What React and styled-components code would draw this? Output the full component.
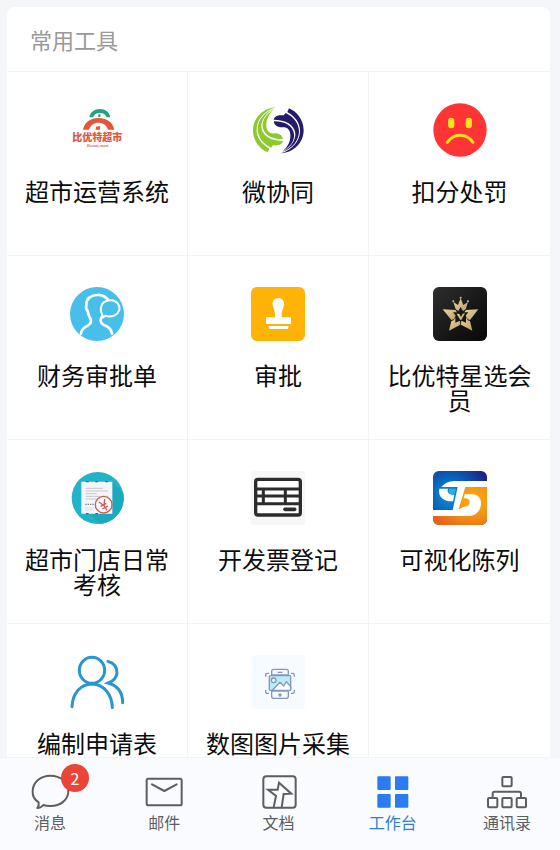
import React from "react";
import styled, { createGlobalStyle, ThemeProvider } from "styled-components";

const theme = {
  page: "#f4f6f9",
  card: "#ffffff",
  bar: "#f9fbfe",
  line: "#f1f3f5",
  muted: "#999999",
  text: "#0c0c0c",
  tab: "#5c5e62",
  active: "#2a7cf0",
  activeText: "#2f80cc",
  badge: "#eb4537"
};

const GlobalStyle = createGlobalStyle`
  * {
    box-sizing: border-box;
  }

  body {
    margin: 0;
    background: ${theme.page};
    font-family: "Noto Sans CJK SC", "Noto Sans", sans-serif;
  }

  button {
    margin: 0;
    border: 0;
    background: none;
    font-family: inherit;
    cursor: pointer;
  }
`;

const Screen = styled.div`
  display: flex;
  flex-direction: column;
  height: 100vh;
`;

const Main = styled.main`
  flex: 1;
  min-height: 0;
  padding: 7px 10px 0 7px;
  overflow-y: auto;
  scrollbar-width: none;
`;

const Card = styled.section`
  background: ${props => props.theme.card};
  border-radius: 8px 8px 0 0;
`;

const CardTitle = styled.h2`
  margin: 0;
  padding: 16px 23px;
  border-bottom: 1px solid ${props => props.theme.line};
  font-size: 22px;
  font-weight: 400;
  line-height: 32px;
  color: ${props => props.theme.muted};
`;

const ToolGrid = styled.div`
  display: grid;
  grid-template-columns: repeat(3, 1fr);
  grid-auto-rows: minmax(184px, auto);
`;

const Tool = styled.button`
  display: flex;
  flex-direction: column;
  align-items: center;
  gap: 21px;
  padding: 31px 16px 0;
  border-bottom: 1px solid ${props => props.theme.line};

  &:not(:nth-child(3n)) {
    border-right: 1px solid ${props => props.theme.line};
  }
`;

const ToolIcon = styled.svg`
  display: block;
  flex: none;
  width: 54px;
  height: 54px;
`;

const ToolLabel = styled.span`
  font-size: 24px;
  line-height: 25px;
  text-align: center;
  color: ${props => props.theme.text};
`;

const TabBar = styled.nav`
  display: flex;
  justify-content: space-between;
  padding: 16px 23px 18px 20px;
  border-top: 1px solid ${props => props.theme.line};
  background: ${props => props.theme.bar};
`;

const Tab = styled.button`
  position: relative;
  display: flex;
  flex-direction: column;
  align-items: center;
  gap: 2px;
  width: 60px;
  padding: 0;
  font-size: 16px;
  line-height: 20px;
  color: ${props => (props.$active ? props.theme.activeText : props.theme.tab)};
`;

const TabIcon = styled.svg`
  display: block;
  width: 40px;
  height: 36px;
  fill: none;
  stroke: currentColor;
  stroke-width: 6;
  stroke-linejoin: round;
  stroke-linecap: round;
`;

const Badge = styled.span`
  position: absolute;
  top: -10px;
  right: -9px;
  width: 28px;
  height: 28px;
  border-radius: 50%;
  background: ${props => props.theme.badge};
  font-size: 16px;
  line-height: 28px;
  text-align: center;
  color: #fff;
`;

const MarketIcon = () => (
  <ToolIcon viewBox="60 39 162 162" overflow="visible">
    <path d="M118 82 C121 66 134 57 150 57 C166 57 178 66 181 82 L170 82 C167 73 160 69 150 69 C140 69 132 73 129 82 Z" fill="#20a084" />
    <circle cx="148" cy="77" r="4" fill="#20a084" />
    <path d="M99 119 C104 96 122 84 145 84 C170 84 188 96 193 119 L174 119 C169 105 160 98 145 98 C132 98 122 105 117 119 Z" fill="#e2563b" />
    <path d="M138 110 L151 108 L150 119 L137 119 Z" fill="#e2563b" />
    <text x="142" y="154" fontSize="30" fontWeight="900" textAnchor="middle" fill="#e2563b">
      比优特超市
    </text>
    <text x="143" y="171" fontSize="13" fontStyle="italic" fontWeight="700" fontFamily="Liberation Serif, serif" textAnchor="middle" fill="#d4705c">
      Beauty.mart
    </text>
  </ToolIcon>
);

// one half of the swirl, the other half is the same turned by 180 degrees
const leaves = (
  <>
    <path d="M122 52 C85 54 54 83 54 121 C54 153 75 177 98 187 L103 176 C79 162 64 143 65 118 C66 88 87 63 122 52 Z" />
    <path d="M119 55 C87 67 68 91 68 118 C69 144 86 163 108 173 L114 166 C134 168 142 161 144 153 C108 153 82 138 79 112 C78 90 92 70 119 55 Z" />
    <path d="M116 59 C92 74 81 90 83 111 C87 133 107 147 143 148 C144 138 134 130 120 130 C104 132 95 124 94 108 C93 88 101 73 116 59 Z" />
  </>
);

const SwirlIcon = () => (
  <ToolIcon viewBox="48 39 162 162">
    <g fill="#8dc92f">{leaves}</g>
    <g fill="#261b6b" transform="rotate(180 130 121)">
      {leaves}
    </g>
  </ToolIcon>
);

const SadIcon = () => (
  <ToolIcon viewBox="51 39 162 162">
    <circle cx="132" cy="120" r="80" fill="#ff3434" />
    <rect x="96" y="83" width="19" height="32" rx="9" fill="#ffe11c" />
    <rect x="149" y="83" width="19" height="32" rx="9" fill="#ffe11c" />
    <path d="M94 157 C114 129 151 129 171 157" fill="none" stroke="#ffe11c" strokeWidth="9" strokeLinecap="round" />
  </ToolIcon>
);

const ConsultIcon = () => (
  <ToolIcon viewBox="60 36 162 162">
    <circle cx="141" cy="117" r="81" fill="#47bfea" />
    <g fill="none" stroke="#fff" strokeWidth="8" strokeLinecap="round">
      <path d="M93 176 C94 150 124 158 123 137 C122 127 114 124 113 107 C105 102 109 96 109 88 C109 70 124 60 143 60 C157 58 165 66 173 72" />
      <path d="M158 122 C149 134 150 143 160 149 C177 155 185 162 186 176" />
      <path d="M158 122 C149 107 151 91 161 82 C173 73 194 74 203 85 C214 98 207 115 194 121 C183 126 173 125 166 122 C163 126 160 128 156 127 Z" fill="#47bfea" strokeWidth="6" strokeLinejoin="round" />
    </g>
  </ToolIcon>
);

const StampIcon = () => (
  <ToolIcon viewBox="48 36 162 162">
    <rect x="48" y="36" width="162" height="162" rx="18" fill="#ffb307" />
    <path d="M130 69 C142 69 148 78 147 89 C146 99 140 107 140 116 V127 H168 V147 H93 V127 H120 V116 C120 107 114 99 113 89 C112 78 118 69 130 69 Z" fill="#fff" />
    <path d="M100 153 H161 L158 162 H104 Z" fill="#fff" />
  </ToolIcon>
);

const MemberIcon = () => (
  <ToolIcon viewBox="36 36 162 162">
    <defs>
      <linearGradient id="gold" x1="0" y1="0" x2="1" y2="1">
        <stop offset="0" stopColor="#e9d5a2" />
        <stop offset="1" stopColor="#bd9f66" />
      </linearGradient>
      <linearGradient id="night" x1="0" y1="0" x2="1" y2="1">
        <stop offset="0" stopColor="#2f2f2f" />
        <stop offset="0.6" stopColor="#151515" />
        <stop offset="1" stopColor="#090909" />
      </linearGradient>
    </defs>
    <rect x="36" y="36" width="162" height="162" rx="18" fill="url(#night)" />
    <g fill="url(#gold)">
      <path d="M65 103 L103 105 L108 112 L96 112 L104 122 L98 133 L91 135 Z" />
      <path d="M172 103 L135 105 L130 112 L142 112 L134 122 L140 133 L147 135 Z" />
      <path d="M91 138 L98 136 L103 127 L103 143 L117 137 L118 149 L84 167 Z" />
      <path d="M147 138 L140 136 L135 127 L135 143 L121 137 L120 149 L154 167 Z" />
      <path d="M104 103 L97 81 L111 90 L119 70 L127 90 L141 81 L134 103 L126 108 L119 96 L112 108 Z" />
      <circle cx="97" cy="79" r="3" />
      <circle cx="119" cy="68" r="3" />
      <circle cx="141" cy="79" r="3" />
      <path d="M107 116 L115 117 L120 126 L125 116 L132 115 L121 135 L118 135 Z" />
    </g>
  </ToolIcon>
);

const CheckIcon = () => (
  <ToolIcon viewBox="60 33 162 162">
    <circle cx="143" cy="114" r="78" fill="#22b3c8" />
    <path d="M187 66 L220 99 A78 78 0 0 1 151 192 L117 161 H187 Z" fill="#1ba9be" />
    <path d="M94 65 H187 V161 H94 Z" fill="#f4f6f9" />
    <path d="M108 65 h8 M136 65 h8 M166 65 h8 M108 161 h8 M136 161 h8" stroke="#197b91" strokeWidth="4" />
    <path d="M107 85 H159 M107 93 H174 M107 101 H140 M107 109 H174 M107 117 H140" stroke="#c5c8cb" strokeWidth="3" />
    <path d="M106 133 H133" stroke="#777b80" strokeWidth="4" strokeDasharray="4 3" />
    <path d="M106 144 H132 M106 150 H130" stroke="#d2d4d7" strokeWidth="3" strokeDasharray="4 2" />
    <g fill="none" stroke="#cd5c59" strokeWidth="4">
      <circle cx="161" cy="134" r="25" />
      <path d="M147 126 L162 137 L164 117 M162 137 L171 151 M152 139 L169 130 M157 147 L174 138" />
    </g>
  </ToolIcon>
);

const InvoiceIcon = () => (
  <ToolIcon viewBox="48 33 162 162">
    <rect x="48" y="33" width="162" height="162" rx="8" fill="#f7f7f7" />
    <rect x="62" y="58" width="134" height="107" rx="7" fill="#fff" stroke="#2c2c2c" strokeWidth="10" />
    <path d="M62 87 H196 M62 108 H196 M62 131 H196 M85 87 V131 M151 87 V131" stroke="#2c2c2c" strokeWidth="9" />
    <path d="M150 148 H179" stroke="#2c2c2c" strokeWidth="11" strokeLinecap="round" />
  </ToolIcon>
);

const DisplayIcon = () => (
  <ToolIcon viewBox="591 33 162 162">
    <defs>
      <radialGradient id="blue" cx="0.3" cy="0.45" r="0.75">
        <stop offset="0" stopColor="#0d96dc" />
        <stop offset="0.5" stopColor="#0a5cb4" />
        <stop offset="1" stopColor="#1b2486" />
      </radialGradient>
      <radialGradient id="orange" cx="0.75" cy="0.4" r="0.8">
        <stop offset="0" stopColor="#fbae12" />
        <stop offset="0.5" stopColor="#f29112" />
        <stop offset="1" stopColor="#e8641b" />
      </radialGradient>
      <clipPath id="tile">
        <rect x="591" y="33" width="162" height="162" rx="18" />
      </clipPath>
    </defs>
    <g clipPath="url(#tile)">
      <rect x="591" y="33" width="162" height="162" fill="url(#blue)" />
      <path d="M753 72 H690 L652 160 H591 V195 H753 Z" fill="url(#orange)" />
      <path d="M753 63 H655 C637 64 624 71 616 81 H665 L650 150 H591 V168 H695 C722 168 735 150 735 130 C735 114 726 104 708 103 H686 L683 115 C699 113 706 124 698 135 C692 143 682 137 672 147 L668 147 L688 81 H753 Z" fill="#fff" />
      <path d="M610 86 H636 C631 97 640 105 655 105 L651 124 C621 125 605 108 610 86 Z" fill="#fff" />
      <path d="M640 86 H660 L655 105 C642 105 635 97 640 86 Z" fill="#24b3e8" />
    </g>
  </ToolIcon>
);

const PeopleIcon = () => (
  <ToolIcon viewBox="60 45 162 162">
    <g fill="none" stroke="#2997ce" strokeWidth="9" strokeLinecap="round">
      <ellipse cx="126" cy="91" rx="38" ry="39" />
      <path d="M66 200 C68 158 92 133 126 132 C162 133 186 163 187 203" />
      <path d="M174 64 C192 69 201 82 201 98 C200 116 190 123 175 129 C202 137 218 158 218 188" />
    </g>
  </ToolIcon>
);

const PhotoIcon = () => (
  <ToolIcon viewBox="603 45 162 162">
    <rect x="603" y="45" width="162" height="162" rx="12" fill="#f6fbff" />
    <g fill="none" stroke="#8596bd" strokeWidth="4" strokeLinejoin="round">
      <path d="M665 105 V94 Q665 88 671 88 H709 Q715 88 715 94 V105 Z M665 153 V169 Q665 175 671 175 H709 Q715 175 715 169 V153 Z" />
      <path d="M683 97 H697 M647 110 V105 Q647 100 653 100 H657 M723 100 H728 Q733 100 733 105 V110 M647 150 V155 Q647 160 653 160 H657 M723 160 H728 Q733 160 733 155 V150" />
      <rect x="658" y="107" width="64" height="44" rx="3" fill="#b9ecfa" />
      <circle cx="671" cy="121" r="7" fill="#e9f9ff" />
      <path d="M667 151 L690 127 L701 138 L709 125 L722 140 V151 Z" fill="#fff" />
      <circle cx="690" cy="165" r="3" />
    </g>
  </ToolIcon>
);

const tools = [
  { name: "超市运营系统", Icon: MarketIcon },
  { name: "微协同", Icon: SwirlIcon },
  { name: "扣分处罚", Icon: SadIcon },
  { name: "财务审批单", Icon: ConsultIcon },
  { name: "审批", Icon: StampIcon },
  { name: "比优特星选会员", Icon: MemberIcon },
  { name: "超市门店日常考核", Icon: CheckIcon },
  { name: "开发票登记", Icon: InvoiceIcon },
  { name: "可视化陈列", Icon: DisplayIcon },
  { name: "编制申请表", Icon: PeopleIcon },
  { name: "数图图片采集", Icon: PhotoIcon }
];

const tabs = [
  {
    name: "消息",
    badge: 2,
    icon: (
      <TabIcon viewBox="90 72 120 108">
        <path d="M116 157 C103 149 97 137 98 123 C99 96 122 77 151 77 C182 77 205 97 205 123 C205 150 181 168 151 168 C143 168 136 167 130 165 C126 170 119 174 112 174 C116 169 117 163 116 157 Z" />
      </TabIcon>
    )
  },
  {
    name: "邮件",
    icon: (
      <TabIcon viewBox="432 72 120 108">
        <rect x="440" y="86" width="105" height="80" rx="5" />
        <path d="M456 103 L493 123 L530 103" />
      </TabIcon>
    )
  },
  {
    name: "文档",
    icon: (
      <TabIcon viewBox="774 72 120 108">
        <rect x="787" y="79" width="97" height="94" rx="9" />
        <path d="M818 172 L825 138 L801 119 H830 L834 98 L871 131 L848 132 L842 172" strokeLinejoin="miter" />
      </TabIcon>
    )
  },
  {
    name: "工作台",
    active: true,
    icon: (
      <TabIcon viewBox="279 72 120 108">
        <path d="M295 82 H329 V117 H295 Z M348 82 H382 V117 H348 Z M295 135 H329 V170 H295 Z M348 135 H382 V170 H348 Z" fill={theme.active} stroke={theme.active} />
      </TabIcon>
    )
  },
  {
    name: "通讯录",
    icon: (
      <TabIcon viewBox="621 72 120 108">
        <rect x="667" y="81" width="28" height="28" rx="3" />
        <path d="M638 143 V131 Q638 125 644 125 H717 Q723 125 723 131 V143" />
        <rect x="624" y="144" width="28" height="28" rx="3" />
        <rect x="667" y="144" width="28" height="28" rx="3" />
        <rect x="710" y="144" width="28" height="28" rx="3" />
      </TabIcon>
    )
  }
];

const App = () => (
  <ThemeProvider theme={theme}>
    <GlobalStyle />
    <Screen>
      <Main>
        <Card>
          <CardTitle>常用工具</CardTitle>
          <ToolGrid>
            {tools.map(({ name, Icon }) => (
              <Tool key={name} type="button">
                <Icon />
                <ToolLabel>{name}</ToolLabel>
              </Tool>
            ))}
          </ToolGrid>
        </Card>
      </Main>
      <TabBar>
        {tabs.map(tab => (
          <Tab key={tab.name} type="button" $active={tab.active}>
            {tab.icon}
            {tab.name}
            {tab.badge && <Badge>{tab.badge}</Badge>}
          </Tab>
        ))}
      </TabBar>
    </Screen>
  </ThemeProvider>
);

export default App;
